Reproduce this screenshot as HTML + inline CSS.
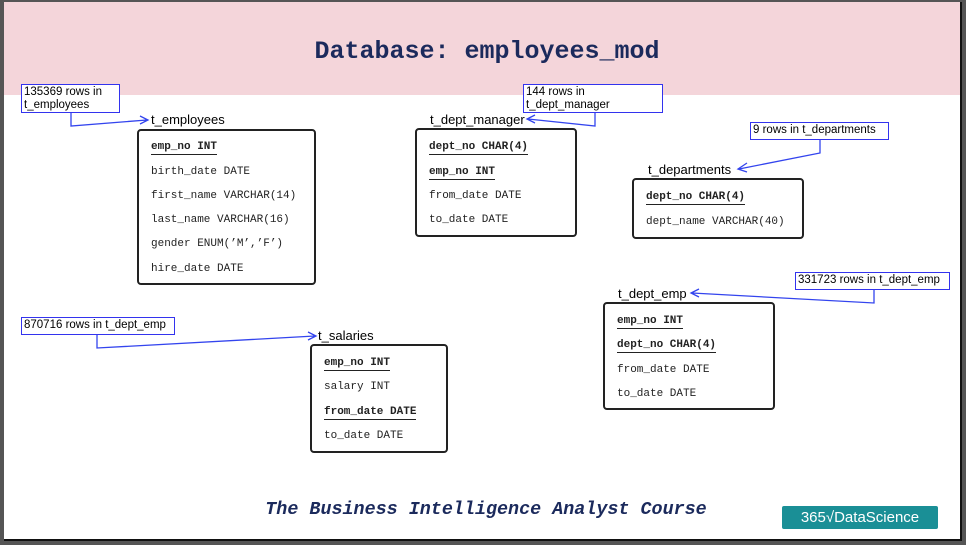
<!DOCTYPE html>
<html><head><style>
*{margin:0;padding:0;box-sizing:border-box}
body{width:966px;height:545px;overflow:hidden;background:#555;position:relative;font-family:"Liberation Sans",sans-serif}
#slide{position:absolute;left:4px;top:2px;width:958px;height:539px;background:#fff;border-right:2px solid #111;border-bottom:2px solid #111}
#hdr{position:absolute;left:0;top:0;width:100%;height:93px;background:#f4d5da}
.title{position:absolute;left:0;width:100%;top:35px;text-align:center;font-family:"Liberation Mono",monospace;font-weight:bold;font-size:25px;color:#1b2a5c;padding-left:10px}
.note{position:absolute;border:1.5px solid #3333ee;background:#fff;font-size:11.5px;line-height:13px;padding:1px 2px;color:#000}
.lbl{position:absolute;font-size:13px;color:#000}
.tbl{position:absolute;border:2.5px solid #222;border-radius:4px;background:#fff;font-family:"Liberation Mono",monospace;font-size:11px;color:#222}
.tbl div{position:absolute;left:12px;white-space:nowrap;margin-top:2px}
.tbl b{border-bottom:1.5px solid #222;padding-bottom:1px}
.foot{position:absolute;left:0;width:100%;top:499px;text-align:center;font-family:"Liberation Mono",monospace;font-weight:bold;font-style:italic;font-size:18.4px;color:#1b2a5c;padding-left:6px}
.logo{position:absolute;left:782px;top:506px;width:156px;height:23px;background:#1a8f96;border-radius:2px;color:#fff;font-size:15px;line-height:23px;text-align:center}
</style></head><body>
<div id="slide">
<div id="hdr"></div>
<div class="title">Database: employees_mod</div>
</div>
<svg style="position:absolute;left:0;top:0" width="966" height="545">
<g stroke="#3344ee" stroke-width="1.3" fill="none">
<path d="M71 112 V126 L147 120 M140 116 L148 120 L140 124"/>
<path d="M595 111 V126 L528 119 M535 115 L527 119 L535 123"/>
<path d="M820 139 V153 L739 169 M747 163 L738 169 L747 172"/>
<path d="M874 288 V303 L692 293 M699 289 L691 293 L699 297"/>
<path d="M97 333 V348 L315 336 M308 332 L316 336 L308 340"/>
</g></svg>
<div class="note" style="left:21px;top:84px;width:99px;height:29px">135369 rows in<br>t_employees</div>
<div class="note" style="left:523px;top:84px;width:140px;height:29px">144 rows in<br>t_dept_manager</div>
<div class="note" style="left:750px;top:122px;width:139px;height:18px">9 rows in t_departments</div>
<div class="note" style="left:795px;top:272px;width:155px;height:18px">331723 rows in t_dept_emp</div>
<div class="note" style="left:21px;top:317px;width:154px;height:18px">870716 rows in t_dept_emp</div>
<div class="lbl" style="left:151px;top:112px">t_employees</div>
<div class="lbl" style="left:430px;top:112px">t_dept_manager</div>
<div class="lbl" style="left:648px;top:162px">t_departments</div>
<div class="lbl" style="left:618px;top:286px">t_dept_emp</div>
<div class="lbl" style="left:318px;top:328px">t_salaries</div>
<div class="tbl" style="left:137px;top:129px;width:179px;height:156px">
<div style="top:8px"><b>emp_no INT</b></div><div style="top:33px">birth_date DATE</div><div style="top:57px">first_name VARCHAR(14)</div><div style="top:81px">last_name VARCHAR(16)</div><div style="top:105px">gender ENUM(’M’,’F’)</div><div style="top:130px">hire_date DATE</div></div>
<div class="tbl" style="left:415px;top:128px;width:162px;height:109px">
<div style="top:9px"><b>dept_no CHAR(4)</b></div><div style="top:34px"><b>emp_no INT</b></div><div style="top:58px">from_date DATE</div><div style="top:82px">to_date DATE</div></div>
<div class="tbl" style="left:632px;top:178px;width:172px;height:61px">
<div style="top:9px"><b>dept_no CHAR(4)</b></div><div style="top:34px">dept_name VARCHAR(40)</div></div>
<div class="tbl" style="left:603px;top:302px;width:172px;height:108px">
<div style="top:9px"><b>emp_no INT</b></div><div style="top:33px"><b>dept_no CHAR(4)</b></div><div style="top:58px">from_date DATE</div><div style="top:82px">to_date DATE</div></div>
<div class="tbl" style="left:310px;top:344px;width:138px;height:109px">
<div style="top:9px"><b>emp_no INT</b></div><div style="top:33px">salary INT</div><div style="top:58px"><b>from_date DATE</b></div><div style="top:82px">to_date DATE</div></div>
<div class="foot">The Business Intelligence Analyst Course</div>
<div class="logo">365√DataScience</div>
</body></html>
